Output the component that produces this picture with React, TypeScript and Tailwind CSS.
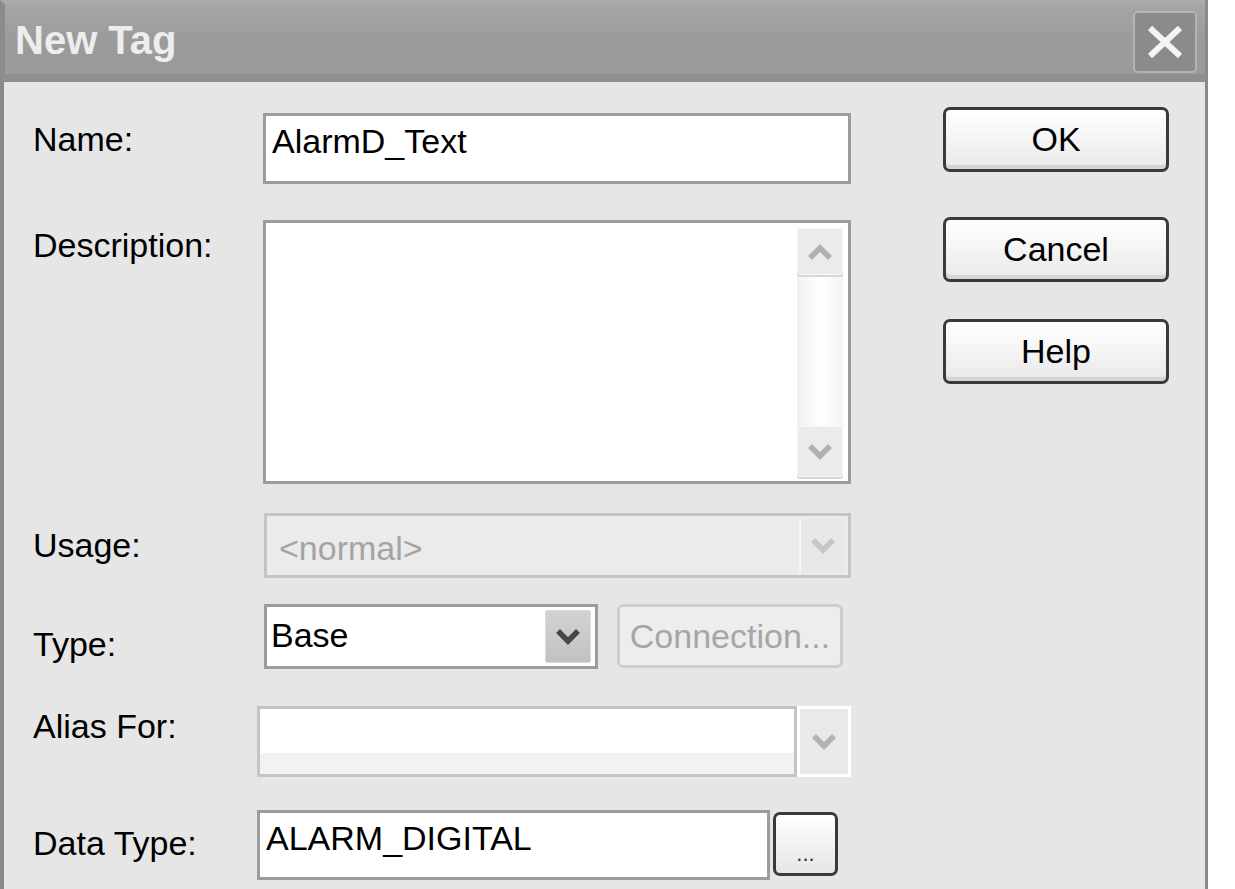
const font = { fontFamily: '"Liberation Sans", Arial, sans-serif' };

const Chevron = ({ up = false, color }: { up?: boolean; color: string }) => (
  <svg width="26" height="18" viewBox="0 0 26 18">
    <polyline
      points={up ? "3,15 13,5 23,15" : "3,3 13,13 23,3"}
      fill="none"
      stroke={color}
      strokeWidth="5.5"
      strokeLinejoin="miter"
    />
  </svg>
);

const Button = ({ label, className = "" }: { label: string; className?: string }) => (
  <div
    className={`flex items-center justify-center border-[3px] border-[#3a3a3a] rounded-[7px] bg-linear-to-b from-white to-[#e9e9e9] shadow-[inset_0_-4px_0_#d4d4d4] text-[34px] text-black ${className}`}
  >
    {label}
  </div>
);

export default function App() {
  return (
    <div className="w-[1235px] h-[889px] bg-white overflow-hidden" style={font}>
      <div className="w-[1208px] h-[889px] flex flex-col bg-[#e6e6e6] border-r-[3px] border-[#8a8a8a]">
        {/* title bar */}
        <div className="h-[82px] shrink-0 flex items-center justify-between bg-linear-to-b from-[#a6a6a6] via-[#9b9b9b] to-[#9a9a9a] border-t-[4px] border-t-[#ababab] border-b-[8px] border-b-[#8f8f8f] border-l-[5px] border-l-[#8c8c8c] pl-[10px] pr-[8px]">
          <span className="text-[40px] font-bold text-[#ededed] leading-none mt-[2px]">New Tag</span>
          <div className="w-[64px] h-[62px] mt-[6px] rounded-[5px] border-2 border-[#b4b4b4] bg-[#8b8b8b] flex items-center justify-center">
            <svg width="38" height="34" viewBox="0 0 38 34">
              <path d="M4 3 L34 31 M34 3 L4 31" stroke="#f4f4f4" strokeWidth="6" />
            </svg>
          </div>
        </div>

        {/* body */}
        <div className="flex-1 flex border-l-[4px] border-[#8a8a8a] pl-[29px]">
          <div className="flex flex-col pt-[31px] text-[34px] leading-[38px] text-black">
            {/* Name */}
            <div className="flex">
              <div className="w-[230px] pt-[7px]">Name:</div>
              <div className="w-[588px] h-[71px] border-[3px] border-[#9c9c9c] bg-white pl-[6px] pt-[6px]">
                AlarmD_Text
              </div>
            </div>

            {/* Description */}
            <div className="flex mt-[36px]">
              <div className="w-[230px] pt-[6px]">Description:</div>
              <div className="w-[588px] h-[264px] border-[3px] border-[#9c9c9c] bg-white flex justify-end pr-[5px] pt-[5px] pb-[4px]">
                <div className="w-[46px] flex flex-col bg-linear-to-r from-[#f0f0f0] via-white to-[#f3f3f3]">
                  <div className="h-[47px] rounded-[3px] border border-[#f8f8f8] bg-[#ebebeb] flex items-center justify-center shadow-[0_2px_0_#d6d6d6]">
                    <Chevron up color="#b0b0b0" />
                  </div>
                  <div className="flex-1" />
                  <div className="h-[51px] rounded-[3px] border border-[#f8f8f8] bg-[#ebebeb] flex items-center justify-center shadow-[0_2px_0_#d6d6d6]">
                    <Chevron color="#b0b0b0" />
                  </div>
                </div>
              </div>
            </div>

            {/* Usage */}
            <div className="flex mt-[29px]">
              <div className="w-[231px] pt-[13px]">Usage:</div>
              <div className="w-[587px] h-[65px] border-[3px] border-[#c4c4c4] bg-[#ebebeb] flex justify-between pl-[12px] pr-[3px] py-[2px]">
                <span className="pt-[11px] text-[#a4a4a4]">&lt;normal&gt;</span>
                <div className="w-[46px] border-l-2 border-[#f6f6f6] bg-[#e8e8e8] flex items-center justify-center">
                  <Chevron color="#c6c6c6" />
                </div>
              </div>
            </div>

            {/* Type */}
            <div className="flex mt-[26px]">
              <div className="w-[231px] pt-[21px]">Type:</div>
              <div className="w-[334px] h-[65px] border-[3px] border-[#9c9c9c] bg-white flex justify-between pl-[4px] pr-[4px] py-[3px]">
                <span className="pt-[6px]">Base</span>
                <div className="w-[46px] border border-[#dadada] bg-linear-to-b from-[#d2d2d2] to-[#c2c2c2] rounded-[2px] flex items-center justify-center">
                  <Chevron color="#474747" />
                </div>
              </div>
              <div className="ml-[19px] w-[226px] h-[64px] rounded-[6px] border-[3px] border-[#cdcdcd] bg-[#ededed] text-[#a6a6a6] flex items-center justify-center">
                Connection...
              </div>
            </div>

            {/* Alias For */}
            <div className="flex mt-[37px]">
              <div className="w-[224px] pt-[1px]">Alias For:</div>
              <div className="w-[540px] h-[71px] border-[3px] border-[#c4c4c4] flex flex-col">
                <div className="h-[44px] bg-white" />
                <div className="flex-1 bg-[#f2f2f2]" />
              </div>
              <div className="w-[54px] h-[71px] border-[3px] border-white bg-[#e9e9e9] flex items-center justify-center">
                <Chevron color="#b2b2b2" />
              </div>
            </div>

            {/* Data Type */}
            <div className="flex mt-[33px]">
              <div className="w-[224px] pt-[14px]">Data Type:</div>
              <div className="w-[513px] h-[70px] border-[3px] border-[#9c9c9c] bg-white pl-[6px] pt-[6px]">
                ALARM_DIGITAL
              </div>
              <div className="ml-[3px] mt-[2px] w-[65px] h-[64px] rounded-[7px] border-[3px] border-[#3a3a3a] bg-linear-to-b from-white to-[#e6e6e6] flex items-end justify-center pb-[8px] text-[22px] leading-none text-[#333]">
                ...
              </div>
            </div>
          </div>

          {/* right buttons */}
          <div className="ml-auto mr-[36px] pt-[25px] flex flex-col">
            <Button label="OK" className="w-[226px] h-[65px]" />
            <Button label="Cancel" className="w-[226px] h-[65px] mt-[45px]" />
            <Button label="Help" className="w-[226px] h-[65px] mt-[37px]" />
          </div>
        </div>
      </div>
    </div>
  );
}
